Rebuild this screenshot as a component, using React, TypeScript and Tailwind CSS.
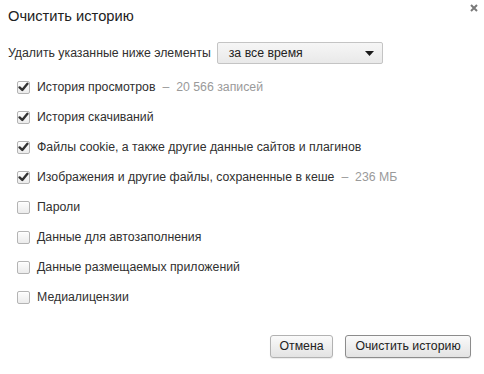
import React from "react";

const items: { label: string; note?: string; checked: boolean }[] = [
  { label: "История просмотров", note: "20 566 записей", checked: true },
  { label: "История скачиваний", checked: true },
  { label: "Файлы cookie, а также другие данные сайтов и плагинов", checked: true },
  { label: "Изображения и другие файлы, сохраненные в кеше", note: "236 МБ", checked: true },
  { label: "Пароли", checked: false },
  { label: "Данные для автозаполнения", checked: false },
  { label: "Данные размещаемых приложений", checked: false },
  { label: "Медиалицензии", checked: false },
];

function Checkbox({ checked }: { checked: boolean }) {
  return (
    <span className="flex h-[13px] w-[13px] flex-shrink-0 items-center justify-center rounded-[2px] border border-[#b4b4b4] bg-gradient-to-b from-[#fdfdfd] to-[#ececec] shadow-[inset_0_1px_0_#fff]">
      {checked && (
        <svg width="11" height="10" viewBox="0 0 11 10">
          <path d="M1.6 5.4 L4.3 8 L9.4 1.8" fill="none" stroke="#333" strokeWidth="2.4" strokeLinecap="round" strokeLinejoin="round" />
        </svg>
      )}
    </span>
  );
}

export default function App() {
  return (
    <div className="relative flex h-[374px] w-[484px] flex-col bg-white font-['Liberation_Sans',Arial,sans-serif] text-[12.3px] text-[#303030]">
      {/* close */}
      <button className="absolute right-[2px] top-0 flex h-[16px] w-[16px] items-center justify-center">
        <svg width="8" height="8" viewBox="0 0 8 8">
          <path d="M1 1 L7 7 M7 1 L1 7" stroke="#7a7a7a" strokeWidth="2" />
        </svg>
      </button>

      <h1 className="pl-2 pt-[6px] text-[14.7px] leading-[20px] text-[#222]">Очистить историю</h1>

      <div className="mt-[16px] flex h-[22px] items-center pl-2">
        <span>Удалить указанные ниже элементы</span>
        <div className="ml-[6px] flex h-[22px] w-[166px] items-center justify-between rounded-[2px] border border-[#c4c4c4] bg-gradient-to-b from-[#f6f6f6] to-[#e9e9e9] pl-[11px] pr-[8px] text-[#222]">
          <span>за все время</span>
          <svg width="9" height="5" viewBox="0 0 9 5">
            <path d="M0 0 H9 L4.5 5 Z" fill="#1a1a1a" />
          </svg>
        </div>
      </div>

      <div className="mt-[8px] flex flex-col">
        {items.map((it) => (
          <label key={it.label} className="flex h-[30px] items-center pl-[17px]">
            <Checkbox checked={it.checked} />
            <span className="ml-[7px]">{it.label}</span>
            {it.note && (
              <span className="ml-[7px] text-[#9a9a9a]">–&nbsp; {it.note}</span>
            )}
          </label>
        ))}
      </div>

      <div className="mt-[23px] flex justify-end gap-[12px] pr-[13px]">
        <button className="h-[23px] w-[63px] rounded-[3px] border border-[#b2b2b2] bg-gradient-to-b from-[#fafafa] to-[#e3e3e3] text-[12.3px] text-[#222] shadow-[0_1px_1px_rgba(0,0,0,0.08)]">
          Отмена
        </button>
        <button className="h-[23px] w-[126px] rounded-[3px] border border-[#8c8c8c] bg-gradient-to-b from-[#fafafa] to-[#e3e3e3] text-[12.3px] text-[#222] shadow-[0_1px_1px_rgba(0,0,0,0.1)]">
          Очистить историю
        </button>
      </div>
    </div>
  );
}
